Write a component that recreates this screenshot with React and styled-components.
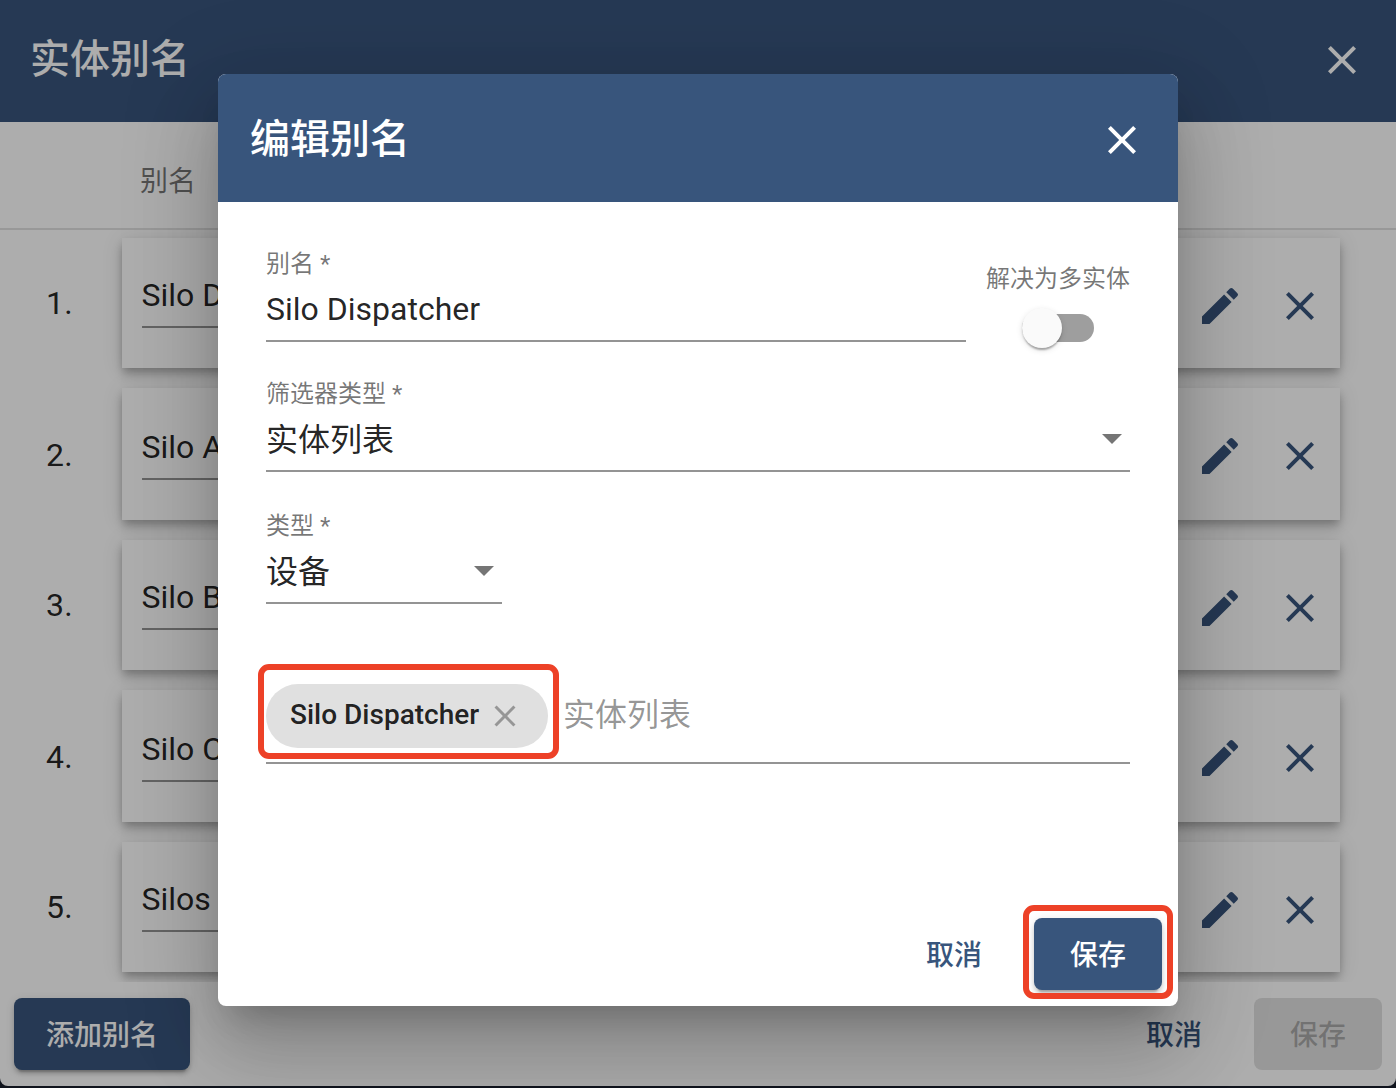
import React from "react";
import styled, { createGlobalStyle, css } from "styled-components";

const PRIMARY = "#38557c";
const HIGHLIGHT = "#ed4127";

const GlobalStyle = createGlobalStyle`
  *, *::before, *::after { box-sizing: border-box; }
  body {
    margin: 0;
    background: #181e2c;
    font-family: Roboto, "Noto Sans CJK SC", sans-serif;
    color: rgba(0, 0, 0, 0.87);
  }
  button { font-family: inherit; border: 0; margin: 0; padding: 0; background: none; }
`;

const Screen = styled.div`
  position: relative;
  width: 1396px;
  height: 1088px;
  overflow: hidden;
`;

const AliasesDialog = styled.section`
  display: flex;
  flex-direction: column;
  height: 1086px;
  background: #fff;
  border-radius: 0 0 8px 8px;
  overflow: hidden;
`;

const Toolbar = styled.header`
  display: flex;
  flex: none;
  align-items: flex-start;
  justify-content: space-between;
  height: ${(p) => p.$height}px;
  padding: ${(p) => p.$top}px ${(p) => p.$right}px 0 ${(p) => p.$left}px;
  background: ${PRIMARY};
  color: #fff;
`;

const Title = styled.h2`
  margin: 0;
  font-size: 40px;
  font-weight: 500;
  line-height: 48px;
`;

const IconButton = styled.button`
  display: flex;
  width: 48px;
  height: 48px;
  color: inherit;
`;

const Icon = styled.svg`
  display: block;
  flex: none;
  width: ${(p) => p.$size}px;
  height: ${(p) => p.$size}px;
  fill: currentColor;
`;

const TableHead = styled.div`
  flex: none;
  height: 108px;
  padding: 40px 0 0 140px;
  border-bottom: 2px solid rgba(0, 0, 0, 0.12);
  color: rgba(0, 0, 0, 0.54);
  font-size: 28px;
  line-height: 40px;
`;

const AliasList = styled.div`
  display: flex;
  flex: 1;
  flex-direction: column;
  gap: 20px;
  padding: 8px 56px 0 0;
  overflow: hidden;
`;

const AliasRow = styled.div`
  display: flex;
  flex: none;
  height: ${(p) => p.$height}px;
`;

const RowNumber = styled.div`
  width: 122px;
  padding: ${(p) => p.$top}px 0 0 46px;
  font-size: 32px;
  line-height: 40px;
  letter-spacing: 0.3px;
`;

const AliasCard = styled.div`
  display: flex;
  flex: 1;
  align-items: flex-start;
  padding: 0 16px 0 20px;
  background: #fff;
  box-shadow: 0 4px 8px -2px rgba(0, 0, 0, 0.2), 0 8px 10px 0 rgba(0, 0, 0, 0.14),
    0 2px 20px 0 rgba(0, 0, 0, 0.12);
`;

const AliasName = styled.div`
  width: 420px;
  height: ${(p) => p.$height}px;
  padding-top: ${(p) => p.$height - 53}px;
  border-bottom: 2px solid rgba(0, 0, 0, 0.42);
  font-size: 32px;
  line-height: 40px;
  text-indent: -0.5px;
`;

const RowActions = styled.div`
  display: flex;
  gap: 32px;
  margin: 44px 0 0 auto;
  color: ${PRIMARY};
`;

const Footer = styled.footer`
  display: flex;
  flex: none;
  align-items: center;
  gap: 20px;
  height: ${(p) => p.$height}px;
  padding: ${(p) => p.$height - 88}px ${(p) => p.$inset}px 16px;
`;

const Spacer = styled.div`
  flex: 1;
`;

const kinds = {
  primary: css`
    background: ${PRIMARY};
    color: #fff;
    box-shadow: 0 6px 2px -4px rgba(0, 0, 0, 0.2), 0 4px 4px 0 rgba(0, 0, 0, 0.14),
      0 2px 10px 0 rgba(0, 0, 0, 0.12);
  `,
  plain: css`
    color: ${PRIMARY};
  `,
  disabled: css`
    background: rgba(0, 0, 0, 0.12);
    color: rgba(0, 0, 0, 0.26);
  `,
};

const Button = styled.button`
  display: block;
  height: 72px;
  padding: 4px ${(p) => p.$pad || 36}px 0;
  border-radius: 8px;
  font-size: 28px;
  font-weight: 500;
  line-height: 68px;
  white-space: nowrap;
  ${(p) => kinds[p.$kind]}
`;

const Backdrop = styled.div`
  position: absolute;
  inset: 0;
  display: flex;
  align-items: flex-start;
  justify-content: center;
  padding-top: 74px;
  background: rgba(0, 0, 0, 0.32);
`;

const EditDialog = styled.section`
  display: flex;
  flex-direction: column;
  width: 960px;
  height: 932px;
  border-radius: 8px;
  background: #fff;
  box-shadow: 0 22px 30px -14px rgba(0, 0, 0, 0.2), 0 48px 76px 6px rgba(0, 0, 0, 0.14),
    0 18px 92px 16px rgba(0, 0, 0, 0.12);

  ${Toolbar} { border-radius: 8px 8px 0 0; }
`;

const Form = styled.div`
  flex: 1;
  padding: 40px 48px 0;
`;

const FormRow = styled.div`
  display: flex;
  gap: 20px;
  margin-bottom: ${(p) => p.$gap}px;
`;

const Field = styled.div`
  flex: ${(p) => (p.$width ? "none" : 1)};
  width: ${(p) => (p.$width ? `${p.$width}px` : "auto")};
  height: 100px;
  padding-top: 8px;
  border-bottom: 2px solid #949494;
`;

const FieldLabel = styled.div`
  color: rgba(0, 0, 0, 0.54);
  font-size: 24px;
  line-height: 28px;
`;

const FieldValue = styled.div`
  display: flex;
  align-items: center;
  justify-content: space-between;
  height: 40px;
  margin-top: ${(p) => (p.$latin ? 11 : 12)}px;
  padding-right: 8px;
  font-size: 32px;
  line-height: 40px;
`;

const Arrow = styled.span`
  margin-bottom: 2px;
  border: 10px solid transparent;
  border-top-color: rgba(0, 0, 0, 0.54);
  border-bottom-width: 0;
`;

const ToggleGroup = styled.div`
  display: flex;
  flex-direction: column;
  align-items: center;
  padding-top: 23px;
  color: rgba(0, 0, 0, 0.54);
  font-size: 24px;
  line-height: 28px;
`;

const ToggleTrack = styled.div`
  display: flex;
  align-items: center;
  width: 72px;
  height: 28px;
  margin-top: 21px;
  border-radius: 14px;
  background: #9e9e9e;
`;

const ToggleThumb = styled.span`
  width: 40px;
  height: 40px;
  border-radius: 50%;
  background: #fafafa;
  box-shadow: 0 4px 2px -2px rgba(0, 0, 0, 0.2), 0 2px 2px 0 rgba(0, 0, 0, 0.14),
    0 2px 6px 0 rgba(0, 0, 0, 0.12);
`;

const ChipField = styled.div`
  display: flex;
  align-items: center;
  gap: 15px;
  height: 80px;
  padding-bottom: 14px;
  border-bottom: 2px solid #949494;
`;

const Marked = styled.div`
  position: relative;
`;

const Mark = styled.span`
  position: absolute;
  inset: ${(p) => p.$inset};
  border: 6px solid ${HIGHLIGHT};
  border-radius: 11px;
  pointer-events: none;
`;

const Chip = styled.div`
  display: flex;
  align-items: center;
  justify-content: space-between;
  width: 282px;
  height: 64px;
  padding: 0 25px 4px 24px;
  border-radius: 32px;
  background: #e0e0e0;
  font-size: 28px;
  font-weight: 500;
  white-space: nowrap;
`;

const ChipRemove = styled.span`
  margin-top: 3px;
  color: #969696;
`;

const Placeholder = styled.span`
  padding-bottom: 2px;
  color: rgba(0, 0, 0, 0.42);
  font-size: 32px;
  line-height: 40px;
`;

const CloseIcon = ({ size = 48 }) => (
  <Icon $size={size} viewBox="0 0 24 24">
    <path d="M19 6.41 17.59 5 12 10.59 6.41 5 5 6.41 10.59 12 5 17.59 6.41 19 12 13.41 17.59 19 19 17.59 13.41 12z" />
  </Icon>
);

const EditIcon = () => (
  <Icon $size={48} viewBox="0 0 24 24">
    <path d="M3 17.25V21h3.75L17.81 9.94l-3.75-3.75L3 17.25zM20.71 7.04a1 1 0 0 0 0-1.41l-2.34-2.34a1 1 0 0 0-1.41 0l-1.83 1.83 3.75 3.75 1.83-1.83z" />
  </Icon>
);

const aliases = [
  { name: "Silo D", height: 130 },
  { name: "Silo A", height: 132 },
  { name: "Silo B", height: 130 },
  { name: "Silo C", height: 132 },
  { name: "Silos", height: 130 },
];

export default function App() {
  return (
    <Screen>
      <GlobalStyle />
      <AliasesDialog>
        <Toolbar $height={122} $top={36} $left={30} $right={30}>
          <Title>实体别名</Title>
          <IconButton>
            <CloseIcon />
          </IconButton>
        </Toolbar>
        <TableHead>别名</TableHead>
        <AliasList>
          {aliases.map((alias, i) => (
            <AliasRow key={alias.name} $height={alias.height}>
              <RowNumber $top={alias.height - 85}>{i + 1}.</RowNumber>
              <AliasCard>
                <AliasName $height={alias.height - 40}>{alias.name}</AliasName>
                <RowActions>
                  <IconButton>
                    <EditIcon />
                  </IconButton>
                  <IconButton>
                    <CloseIcon />
                  </IconButton>
                </RowActions>
              </AliasCard>
            </AliasRow>
          ))}
        </AliasList>
        <Footer $inset={14} $height={104}>
          <Button $kind="primary" $pad={32}>添加别名</Button>
          <Spacer />
          <Button $kind="plain" $pad={32}>取消</Button>
          <Button $kind="disabled">保存</Button>
        </Footer>
      </AliasesDialog>

      <Backdrop>
        <EditDialog>
          <Toolbar $height={128} $top={42} $left={32} $right={32}>
            <Title>编辑别名</Title>
            <IconButton>
              <CloseIcon />
            </IconButton>
          </Toolbar>
          <Form>
            <FormRow $gap={30}>
              <Field $width={700}>
                <FieldLabel>别名 *</FieldLabel>
                <FieldValue $latin>Silo Dispatcher</FieldValue>
              </Field>
              <ToggleGroup>
                解决为多实体
                <ToggleTrack>
                  <ToggleThumb />
                </ToggleTrack>
              </ToggleGroup>
            </FormRow>
            <FormRow $gap={32}>
              <Field>
                <FieldLabel>筛选器类型 *</FieldLabel>
                <FieldValue>
                  实体列表
                  <Arrow />
                </FieldValue>
              </Field>
            </FormRow>
            <FormRow $gap={80}>
              <Field $width={236}>
                <FieldLabel>类型 *</FieldLabel>
                <FieldValue>
                  设备
                  <Arrow />
                </FieldValue>
              </Field>
            </FormRow>
            <ChipField>
              <Marked>
                <Chip>
                  Silo Dispatcher
                  <ChipRemove>
                    <CloseIcon size={36} />
                  </ChipRemove>
                </Chip>
                <Mark $inset="-20px -11px -11px -8px" />
              </Marked>
              <Placeholder>实体列表</Placeholder>
            </ChipField>
          </Form>
          <Footer $inset={16} $height={88}>
            <Spacer />
            <Button $kind="plain" $pad={32}>取消</Button>
            <Marked>
              <Button $kind="primary">保存</Button>
              <Mark $inset="-13px -11px -9px -11px" />
            </Marked>
          </Footer>
        </EditDialog>
      </Backdrop>
    </Screen>
  );
}
